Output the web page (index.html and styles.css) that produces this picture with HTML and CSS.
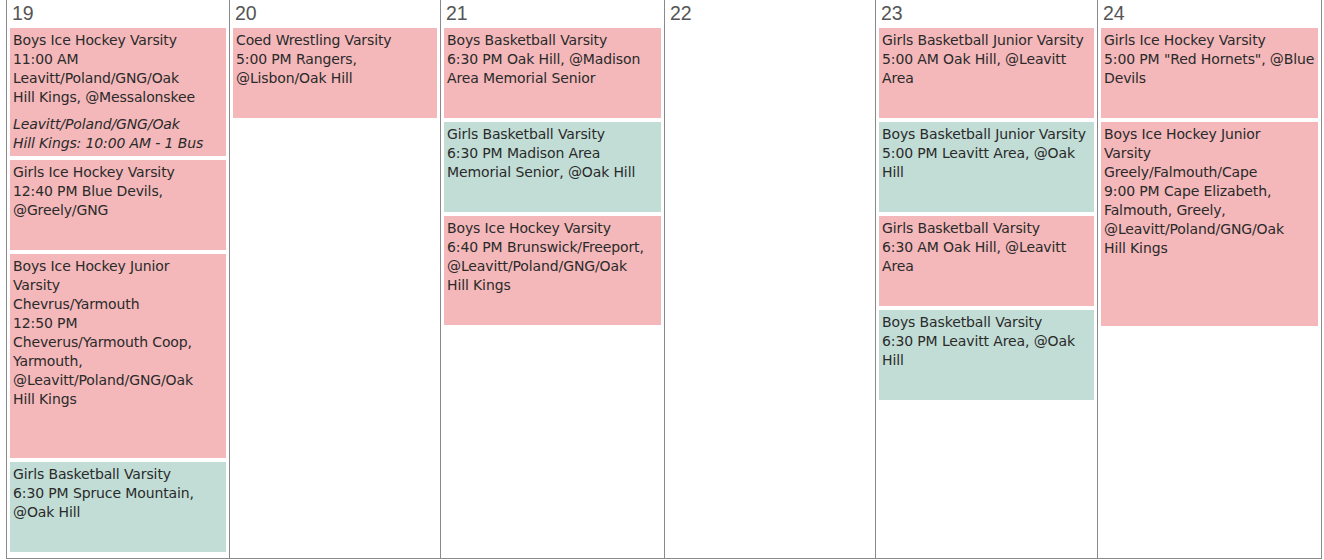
FILE: index.html
```html
<!DOCTYPE html>
<html lang="en">
<head>
<meta charset="utf-8">
<title>Week</title>
<link rel="stylesheet" href="styles.css">
</head>
<body>
<div class="week">
  <div class="day">
    <div class="date">19</div>
    <div class="event away">
      <div class="line">Boys Ice Hockey Varsity</div>
      <div class="line">11:00 AM<br>Leavitt/Poland/GNG/Oak<br>Hill Kings, @Messalonskee</div>
      <div class="note">Leavitt/Poland/GNG/Oak<br>Hill Kings: 10:00 AM - 1 Bus</div>
    </div>
    <div class="event away">
      <div class="line">Girls Ice Hockey Varsity</div>
      <div class="line">12:40 PM Blue Devils,<br>@Greely/GNG</div>
      <div class="note"></div>
    </div>
    <div class="event away tall">
      <div class="line">Boys Ice Hockey Junior<br>Varsity</div>
      <div class="line">Chevrus/Yarmouth</div>
      <div class="line">12:50 PM<br>Cheverus/Yarmouth Coop,<br>Yarmouth,<br>@Leavitt/Poland/GNG/Oak<br>Hill Kings</div>
    </div>
    <div class="event home">
      <div class="line">Girls Basketball Varsity</div>
      <div class="line">6:30 PM Spruce Mountain,<br>@Oak Hill</div>
      <div class="note"></div>
    </div>
  </div>

  <div class="day">
    <div class="date">20</div>
    <div class="event away">
      <div class="line">Coed Wrestling Varsity</div>
      <div class="line">5:00 PM Rangers,<br>@Lisbon/Oak Hill</div>
      <div class="note"></div>
    </div>
  </div>

  <div class="day">
    <div class="date">21</div>
    <div class="event away">
      <div class="line">Boys Basketball Varsity</div>
      <div class="line">6:30 PM Oak Hill, @Madison<br>Area Memorial Senior</div>
      <div class="note"></div>
    </div>
    <div class="event home">
      <div class="line">Girls Basketball Varsity</div>
      <div class="line">6:30 PM Madison Area<br>Memorial Senior, @Oak Hill</div>
      <div class="note"></div>
    </div>
    <div class="event away">
      <div class="line">Boys Ice Hockey Varsity</div>
      <div class="line">6:40 PM Brunswick/Freeport,<br>@Leavitt/Poland/GNG/Oak<br>Hill Kings</div>
      <div class="note"></div>
    </div>
  </div>

  <div class="day">
    <div class="date">22</div>
  </div>

  <div class="day">
    <div class="date">23</div>
    <div class="event away">
      <div class="line">Girls Basketball Junior Varsity</div>
      <div class="line">5:00 AM Oak Hill, @Leavitt<br>Area</div>
      <div class="note"></div>
    </div>
    <div class="event home">
      <div class="line">Boys Basketball Junior Varsity</div>
      <div class="line">5:00 PM Leavitt Area, @Oak<br>Hill</div>
      <div class="note"></div>
    </div>
    <div class="event away">
      <div class="line">Girls Basketball Varsity</div>
      <div class="line">6:30 AM Oak Hill, @Leavitt<br>Area</div>
      <div class="note"></div>
    </div>
    <div class="event home">
      <div class="line">Boys Basketball Varsity</div>
      <div class="line">6:30 PM Leavitt Area, @Oak<br>Hill</div>
      <div class="note"></div>
    </div>
  </div>

  <div class="day last">
    <div class="date">24</div>
    <div class="event away">
      <div class="line">Girls Ice Hockey Varsity</div>
      <div class="line">5:00 PM "Red Hornets", @Blue<br>Devils</div>
      <div class="note"></div>
    </div>
    <div class="event away tall">
      <div class="line">Boys Ice Hockey Junior<br>Varsity</div>
      <div class="line">Greely/Falmouth/Cape</div>
      <div class="line">9:00 PM Cape Elizabeth,<br>Falmouth, Greely,<br>@Leavitt/Poland/GNG/Oak<br>Hill Kings</div>
    </div>
  </div>
</div>
</body>
</html>
```

FILE: styles.css
```css
html, body {
  margin: 0;
  padding: 0;
  background: #ffffff;
}

body {
  font-family: "DejaVu Sans", "Liberation Sans", sans-serif;
  color: #2a2a2a;
}

.week {
  display: grid;
  grid-template-columns: 223px 211px 224px 211px 222px 225px;
  margin-left: 6px;
  height: 559px;
}

.day {
  border-left: 1px solid #8a8a8a;
  border-bottom: 1px solid #8a8a8a;
  padding: 0 3px;
  display: flex;
  flex-direction: column;
  gap: 4px;
  min-width: 0;
}

.day.last {
  border-right: 1px solid #8a8a8a;
}

.date {
  font-family: "Liberation Sans", Arial, sans-serif;
  font-size: 19.5px;
  line-height: 24px;
  padding: 1px 0 0 2px;
  color: #555555;
  margin-bottom: -1px;
}

.event {
  padding: 3px;
  font-size: 14px;
  line-height: 19px;
  letter-spacing: -0.12px;
  white-space: nowrap;
  overflow: hidden;
}

.event.away {
  background: #f4b8ba;
}

.event.home {
  background: #c2ddd6;
}

.event.tall {
  height: 204px;
  box-sizing: border-box;
}

.note {
  margin-top: 8px;
  min-height: 19px;
  font-style: italic;
}
```
